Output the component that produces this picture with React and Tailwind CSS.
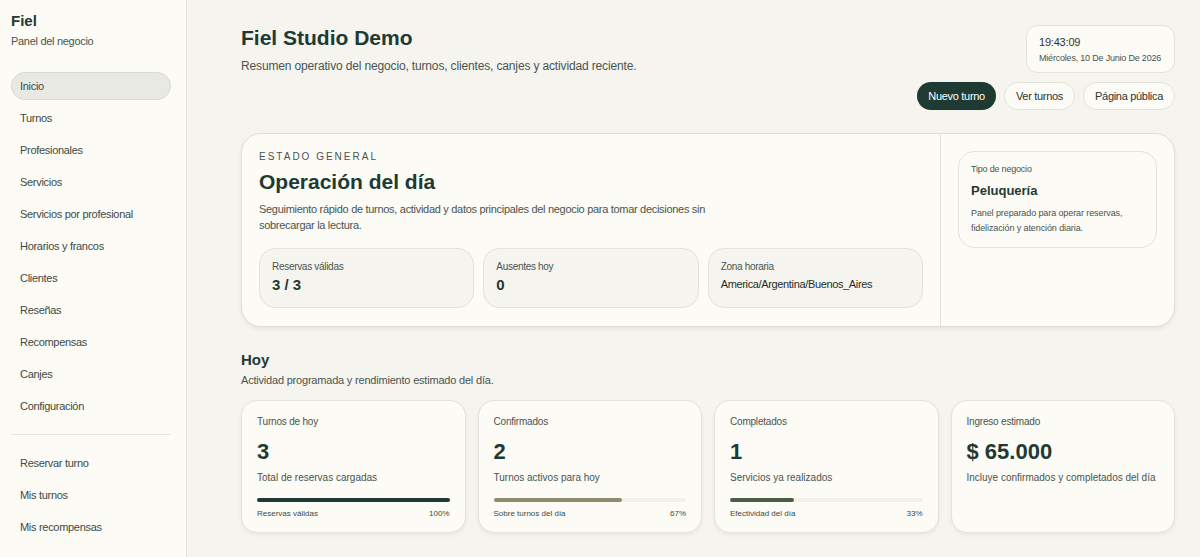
import React from "react";

const nav1 = ["Inicio","Turnos","Profesionales","Servicios","Servicios por profesional","Horarios y francos","Clientes","Reseñas","Recompensas","Canjes","Configuración"];
const nav2 = ["Reservar turno","Mis turnos","Mis recompensas"];

function NavItem({ label, active }) {
  return (
    <div className={"h-[28px] flex items-center px-[8px] rounded-full text-[11px] tracking-[-0.3px] text-[#3d4a44] " + (active ? "bg-[#e9e9e3] border border-[#d9dad3]" : "border border-transparent")}>
      {label}
    </div>
  );
}

function Stat({ label, value, mono }) {
  return (
    <div className="flex-1 h-[60px] rounded-2xl bg-[#f5f4ef] border border-[#e3e3dc] px-[12px] pt-[11px]">
      <div className="text-[10px] tracking-[-0.3px] text-[#4a544f] leading-[14px]">{label}</div>
      <div className={mono ? "mt-[2px] text-[11px] tracking-[-0.35px] text-[#1f2f2a] leading-[16px]" : "mt-[2px] text-[15px] font-bold text-[#1e3a33] leading-[18px]"}>{value}</div>
    </div>
  );
}

function Card({ label, value, desc, pct, color, foot, footPct }) {
  return (
    <div className="flex-1 h-[133px] rounded-2xl bg-[#fcfbf6] border border-[#e3e3dc] shadow-[0_2px_4px_rgba(0,0,0,0.06)] px-[15px] pt-[14px]">
      <div className="text-[10px] tracking-[-0.2px] text-[#4a544f] leading-[14px]">{label}</div>
      <div className="mt-[10px] text-[22px] font-bold text-[#1e3a33] leading-[26px]">{value}</div>
      <div className="mt-[6px] text-[10px] text-[#4a544f] leading-[14px]">{desc}</div>
      {pct != null && (
        <>
          <div className="mt-[13px] h-[4px] rounded-full bg-[#f1f0ea]">
            <div className="h-full rounded-full" style={{ width: pct + "%", background: color }} />
          </div>
          <div className="mt-[6px] flex justify-between text-[8px] text-[#3d4a44] leading-[12px]">
            <span>{foot}</span><span>{footPct}</span>
          </div>
        </>
      )}
    </div>
  );
}

export default function App() {
  return (
    <div className="flex w-[1200px] h-[557px] overflow-hidden bg-[#f5f4ef] font-['Liberation_Sans',Arial,sans-serif]">
      <aside className="w-[187px] shrink-0 bg-[#fcfbf6] border-r border-[#e3e3dc] pl-[11px] pr-[15px] pt-[12px]">
        <div className="text-[15px] font-bold text-[#1e3a33] leading-[18px]">Fiel</div>
        <div className="mt-[4px] text-[11px] tracking-[-0.3px] text-[#4a544f] leading-[14px]">Panel del negocio</div>
        <div className="mt-[24px] flex flex-col gap-[4px]">
          {nav1.map((n, i) => <NavItem key={n} label={n} active={i === 0} />)}
        </div>
        <div className="mt-[14px] mb-[14px] h-px bg-[#e6e5df]" />
        <div className="flex flex-col gap-[4px]">
          {nav2.map((n) => <NavItem key={n} label={n} />)}
        </div>
      </aside>

      <main className="flex-1 pl-[54px] pr-[25px] pt-[25px]">
        <div className="flex justify-between">
          <div>
            <h1 className="text-[21px] font-bold text-[#1e3a33] leading-[26px]">Fiel Studio Demo</h1>
            <p className="mt-[7px] text-[12px] tracking-[-0.15px] text-[#4a544f] leading-[16px]">Resumen operativo del negocio, turnos, clientes, canjes y actividad reciente.</p>
          </div>
          <div className="flex flex-col items-end">
            <div className="w-[149px] h-[48px] rounded-xl bg-[#fcfbf6] border border-[#e3e3dc] pl-[12px] pt-[10px]">
              <div className="text-[11px] tracking-[-0.2px] text-[#2a3531] leading-[13px]">19:43:09</div>
              <div className="mt-[3px] text-[9px] tracking-[-0.2px] text-[#4a544f] leading-[12px]">Miércoles, 10 De Junio De 2026</div>
            </div>
            <div className="mt-[9px] flex gap-[8px]">
              <div className="h-[28px] px-[11px] rounded-full bg-[#1e3a33] text-white text-[11px] tracking-[-0.3px] flex items-center">Nuevo turno</div>
              <div className="h-[28px] px-[11px] rounded-full bg-[#fcfbf6] border border-[#e3e3dc] text-[#2a3531] text-[11px] tracking-[-0.3px] flex items-center">Ver turnos</div>
              <div className="h-[28px] px-[11px] rounded-full bg-[#fcfbf6] border border-[#e3e3dc] text-[#2a3531] text-[11px] tracking-[-0.3px] flex items-center">Página pública</div>
            </div>
          </div>
        </div>

        <section className="mt-[23px] h-[194px] rounded-[20px] bg-[#fcfbf6] border border-[#e0e0d9] shadow-[0_2px_4px_rgba(0,0,0,0.07)] flex">
          <div className="flex-1 pl-[17px] pr-[17px] pt-[17px] border-r border-[#e3e3dc]">
            <div className="text-[10px] tracking-[0.2em] text-[#4a544f] leading-[12px]">ESTADO GENERAL</div>
            <div className="mt-[6px] text-[21px] font-bold text-[#1e3a33] leading-[26px]">Operación del día</div>
            <p className="mt-[6px] text-[11px] tracking-[-0.3px] text-[#4a544f] leading-[16px]">Seguimiento rápido de turnos, actividad y datos principales del negocio para tomar decisiones sin<br />sobrecargar la lectura.</p>
            <div className="mt-[15px] flex gap-[9px]">
              <Stat label="Reservas válidas" value="3 / 3" />
              <Stat label="Ausentes hoy" value="0" />
              <Stat label="Zona horaria" value="America/Argentina/Buenos_Aires" mono />
            </div>
          </div>
          <div className="w-[233px] shrink-0 p-[17px]">
            <div className="rounded-2xl border border-[#e3e3dc] bg-[#fcfbf6] px-[12px] pt-[11px] pb-[11px]">
              <div className="text-[9px] tracking-[-0.2px] text-[#4a544f] leading-[12px]">Tipo de negocio</div>
              <div className="mt-[8px] text-[13px] font-bold text-[#1e3a33] leading-[16px]">Peluquería</div>
              <div className="mt-[7px] text-[9px] tracking-[-0.1px] text-[#4a544f] leading-[15px]">Panel preparado para operar reservas, fidelización y atención diaria.</div>
            </div>
          </div>
        </section>

        <h2 className="mt-[24px] text-[15px] font-bold text-[#1e3a33] leading-[18px]">Hoy</h2>
        <p className="mt-[4px] text-[11px] tracking-[-0.2px] text-[#4a544f] leading-[14px]">Actividad programada y rendimiento estimado del día.</p>
        <div className="mt-[13px] flex gap-[12px]">
          <Card label="Turnos de hoy" value="3" desc="Total de reservas cargadas" pct={100} color="#1e3a33" foot="Reservas válidas" footPct="100%" />
          <Card label="Confirmados" value="2" desc="Turnos activos para hoy" pct={67} color="#8b8f72" foot="Sobre turnos del día" footPct="67%" />
          <Card label="Completados" value="1" desc="Servicios ya realizados" pct={33} color="#4a5e48" foot="Efectividad del día" footPct="33%" />
          <Card label="Ingreso estimado" value="$ 65.000" desc="Incluye confirmados y completados del día" />
        </div>
      </main>
    </div>
  );
}
